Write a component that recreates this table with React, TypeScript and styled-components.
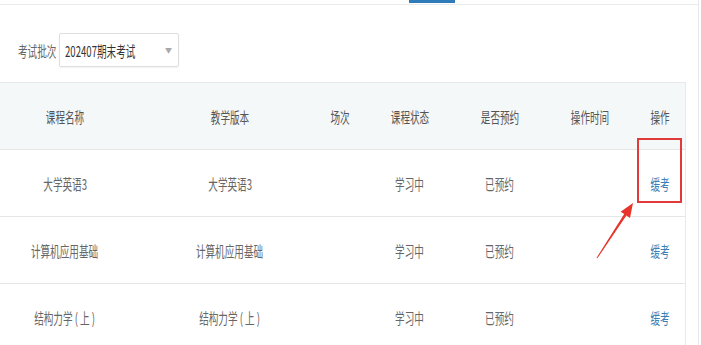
import React from 'react';
import styled, { createGlobalStyle } from 'styled-components';

const GlobalStyle = createGlobalStyle`
  html, body {
    margin: 0;
    padding: 0;
    background: #fff;
  }
  body {
    font-family: "Noto Sans CJK SC", "Noto Sans", "Liberation Sans", sans-serif;
    color: #666;
  }
`

const Page = styled.div`
  width: 698px;
  height: 345px;
  border-right: 1px solid #e6e8ea;
  overflow: hidden;
  display: flex;
  flex-direction: column;
`

const TabBar = styled.div`
  height: 6px;
  border-bottom: 1px solid #e8eaec;
  display: flex;
  align-items: flex-end;
  padding-left: 409px;
`

const TabInk = styled.div`
  width: 46px;
  height: 3px;
  margin-bottom: 1px;
  background: #2f7ab9;
`

const Filter = styled.div`
  display: flex;
  align-items: center;
  gap: 4px;
  padding: 28px 0 0 18px;
  height: 34px;
`

const Txt = styled.span<{ $origin?: string }>`
  display: inline-block;
  white-space: nowrap;
  transform: scaleX(0.64);
  transform-origin: ${p => p.$origin || 'center'};
`

const Label = styled.label`
  font-size: 15px;
  color: #666;
  width: 37px;
`

const Select = styled.div`
  box-sizing: border-box;
  width: 120px;
  height: 34px;
  border: 1px solid #dcdfe2;
  border-radius: 2px;
  box-shadow: 0 1px 2px rgba(0, 0, 0, 0.05);
  display: flex;
  align-items: center;
  padding: 0 6px 0 5px;
  font-size: 15px;
  color: #333;
`

const SelectValue = styled.div`
  flex: 1;
  min-width: 0;
`

const Caret = styled.span`
  flex-shrink: 0;
  font-size: 7px;
  color: #a8a8a8;
`

const Table = styled.div`
  position: relative;
  width: 685px;
  margin-top: 15px;
  border-top: 1px solid #e6eaec;
  border-right: 1px solid #e6eaec;
`

const Row = styled.div<{ $head?: boolean }>`
  display: grid;
  grid-template-columns: 150px 160px 60px 80px 100px 80px 55px;
  height: 66px;
  align-items: center;
  border-bottom: 1px solid #e4e6e8;
  background: ${p => (p.$head ? '#f4f8f9' : '#fff')};
  color: ${p => (p.$head ? '#555' : '#666')};
  font-size: 15px;
`

const Cell = styled.div<{ $col: number }>`
  position: relative;
  text-align: center;
  padding-right: ${p => (p.$col === 0 ? '20px' : '0')};
  padding-left: ${p => (p.$col === 6 ? '5px' : '0')};
`

const Action = styled.a`
  color: #3b7fb6;
  text-decoration: none;
  cursor: pointer;
`

const Highlight = styled.div`
  position: absolute;
  left: 7px;
  top: -35px;
  width: 45px;
  height: 65px;
  box-sizing: border-box;
  border: 2px solid #e2393b;
`

const Pointer = styled.svg`
  position: absolute;
  left: 590px;
  top: 115px;
`

const heads = ['课程名称', '教学版本', '场次', '课程状态', '是否预约', '操作时间', '操作'];

const courses = [
  { name: '大学英语3', book: '大学英语3', mark: true },
  { name: '计算机应用基础', book: '计算机应用基础' },
  { name: '结构力学 ( 上 )', book: '结构力学 ( 上 )' },
];

export default function App() {
  return (
    <>
      <GlobalStyle />
      <Page>
        <TabBar>
          <TabInk />
        </TabBar>
        <Filter>
          <Label><Txt $origin="left">考试批次</Txt></Label>
          <Select>
            <SelectValue><Txt $origin="left">202407期末考试</Txt></SelectValue>
            <Caret>▼</Caret>
          </Select>
        </Filter>
        <Table>
          <Row $head>
            {heads.map((h, i) => (
              <Cell key={h} $col={i}><Txt>{h}</Txt></Cell>
            ))}
          </Row>
          {courses.map(c => (
            <Row key={c.name}>
              <Cell $col={0}><Txt>{c.name}</Txt></Cell>
              <Cell $col={1}><Txt>{c.book}</Txt></Cell>
              <Cell $col={2} />
              <Cell $col={3}><Txt>学习中</Txt></Cell>
              <Cell $col={4}><Txt>已预约</Txt></Cell>
              <Cell $col={5} />
              <Cell $col={6}>
                <Action><Txt>缓考</Txt></Action>
                {c.mark && <Highlight />}
              </Cell>
            </Row>
          ))}
          <Pointer width="50" height="66" viewBox="0 0 50 66">
            <polygon
              points="7.4,60.3 36.4,17.5 40,20 43,5 30.6,13.7 34.2,16 6.6,59.7"
              fill="#e8352c"
            />
          </Pointer>
        </Table>
      </Page>
    </>
  );
}
